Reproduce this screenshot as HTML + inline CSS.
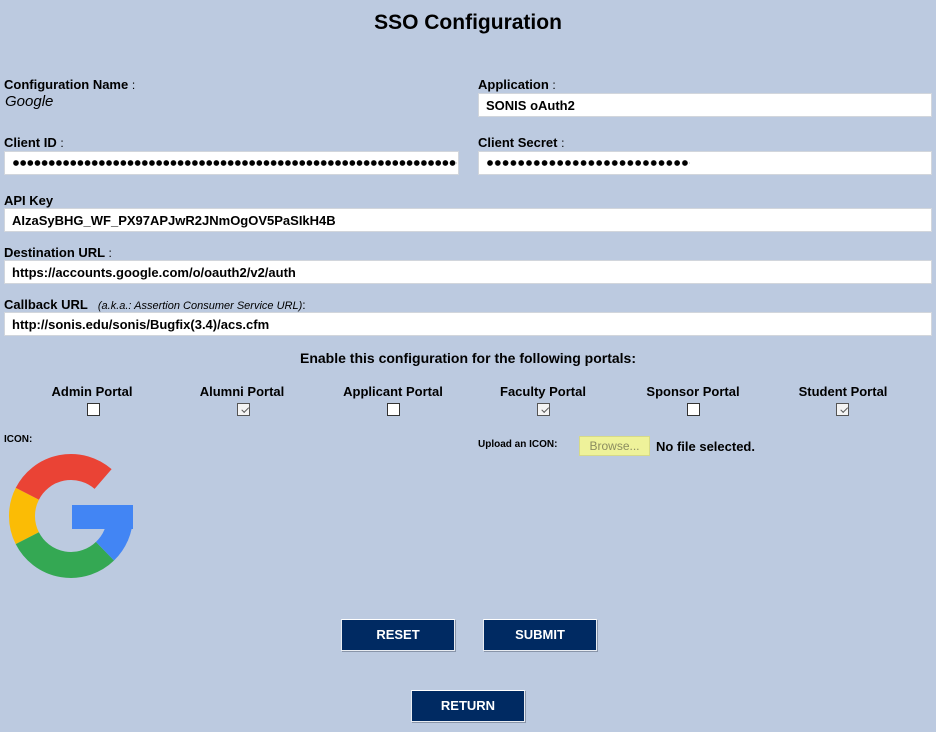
<!DOCTYPE html>
<html><head><style>
body{margin:0;width:936px;height:732px;background:#bccae0;font-family:"Liberation Sans",Arial,sans-serif;position:relative;overflow:hidden;color:#000}
.a{position:absolute}
.l{font-weight:bold;font-size:13px}
.l span{font-weight:normal;font-size:12px}
.in{position:absolute;background:#fff;border:1px solid #d2d6dc;box-sizing:border-box;height:24px;font-size:13px;font-weight:bold;padding:4px 0 0 7px;white-space:nowrap}
.dots{position:absolute;top:8px;left:8px;height:6px;background:radial-gradient(circle at 3px 3px,#000 2.6px,transparent 3px);background-size:7.15px 6px;background-repeat:space no-repeat}
.p{position:absolute;top:384px;width:150px;text-align:center;font-weight:bold;font-size:13px}
.cb{position:absolute;top:403px;width:13px;height:13px;box-sizing:border-box;border:1px solid #333;background:#fff}
.cb.c{border-color:#555;background:#f4f4f4}
.cb.c:after{content:"";position:absolute;left:3px;top:1px;width:6px;height:3px;border-left:1.5px solid #555;border-bottom:1.5px solid #555;transform:rotate(-45deg) translate(-1px,2px)}
.btn{position:absolute;width:114px;height:32px;background:#002a62;border:1px solid #e8ecf2;box-sizing:border-box;border-top-color:#fff;color:#fff;font-weight:bold;font-size:13px;text-align:center;line-height:30px;box-shadow:1px 1px 0 #8894a8}
</style></head><body>
<div class="a" style="left:0;width:936px;top:11px;text-align:center;font-weight:bold;font-size:21px">SSO Configuration</div>

<div class="a l" style="left:4px;top:77px">Configuration Name <span>:</span></div>
<div class="a" style="left:5px;top:93px;font-style:italic;font-size:15px">Google</div>
<div class="a l" style="left:478px;top:77px">Application <span>:</span></div>
<div class="in" style="left:478px;top:93px;width:454px">SONIS oAuth2</div>

<div class="a l" style="left:4px;top:135px">Client ID <span>:</span></div>
<div class="in" style="left:4px;top:151px;width:455px"><div class="dots" style="width:444px"></div></div>
<div class="a l" style="left:478px;top:135px">Client Secret <span>:</span></div>
<div class="in" style="left:478px;top:151px;width:454px"><div class="dots" style="width:203px;background-size:7.8px 6px"></div></div>

<div class="a l" style="left:4px;top:193px">API Key</div>
<div class="in" style="left:4px;top:208px;width:928px">AIzaSyBHG_WF_PX97APJwR2JNmOgOV5PaSIkH4B</div>
<div class="a l" style="left:4px;top:245px">Destination URL <span>:</span></div>
<div class="in" style="left:4px;top:260px;width:928px">https://accounts.google.com/o/oauth2/v2/auth</div>
<div class="a l" style="left:4px;top:297px">Callback URL &nbsp;<span style="font-style:italic;font-size:11px">&nbsp;(a.k.a.: Assertion Consumer Service URL)</span><span>:</span></div>
<div class="in" style="left:4px;top:312px;width:928px">http://sonis.edu/sonis/Bugfix(3.4)/acs.cfm</div>

<div class="a l" style="left:0;width:936px;top:350px;text-align:center;font-size:14px">Enable this configuration for the following portals:</div>

<div class="p" style="left:17px">Admin Portal</div><div class="cb" style="left:87px"></div>
<div class="p" style="left:167px">Alumni Portal</div><div class="cb c" style="left:237px"></div>
<div class="p" style="left:318px">Applicant Portal</div><div class="cb" style="left:387px"></div>
<div class="p" style="left:468px">Faculty Portal</div><div class="cb c" style="left:537px"></div>
<div class="p" style="left:618px">Sponsor Portal</div><div class="cb" style="left:687px"></div>
<div class="p" style="left:768px">Student Portal</div><div class="cb c" style="left:836px"></div>

<div class="a" style="left:4px;top:434px;font-weight:bold;font-size:10px">ICON:</div>
<svg class="a" style="left:0;top:440px" width="150" height="150" viewBox="0 440 150 150">
<g fill="none" stroke-width="26">
<path d="M103.1 479 A49 49 0 0 0 27.3 493.8" stroke="#ea4335"/>
<path d="M27.3 493.8 A49 49 0 0 0 27.3 538.2" stroke="#fbbc05"/>
<path d="M27.3 538.2 A49 49 0 0 0 105 551.2" stroke="#34a853"/>
<path d="M105 551.2 A49 49 0 0 0 120 516" stroke="#4285f4"/>
</g>
<rect x="72" y="505" width="61" height="24" fill="#4285f4"/>
</svg>

<div class="a" style="left:478px;top:439px;font-weight:bold;font-size:10px">Upload an ICON:</div>
<div class="a" style="left:579px;top:436px;width:71px;height:20px;background:#eef29a;border:1px solid #d6da88;box-sizing:border-box;color:#8b8c60;font-size:12px;text-align:center;line-height:18px">Browse...</div>
<div class="a" style="left:656px;top:439px;font-weight:bold;font-size:13px">No file selected.</div>

<div class="btn" style="left:341px;top:619px">RESET</div>
<div class="btn" style="left:483px;top:619px">SUBMIT</div>
<div class="btn" style="left:411px;top:690px">RETURN</div>
</body></html>
